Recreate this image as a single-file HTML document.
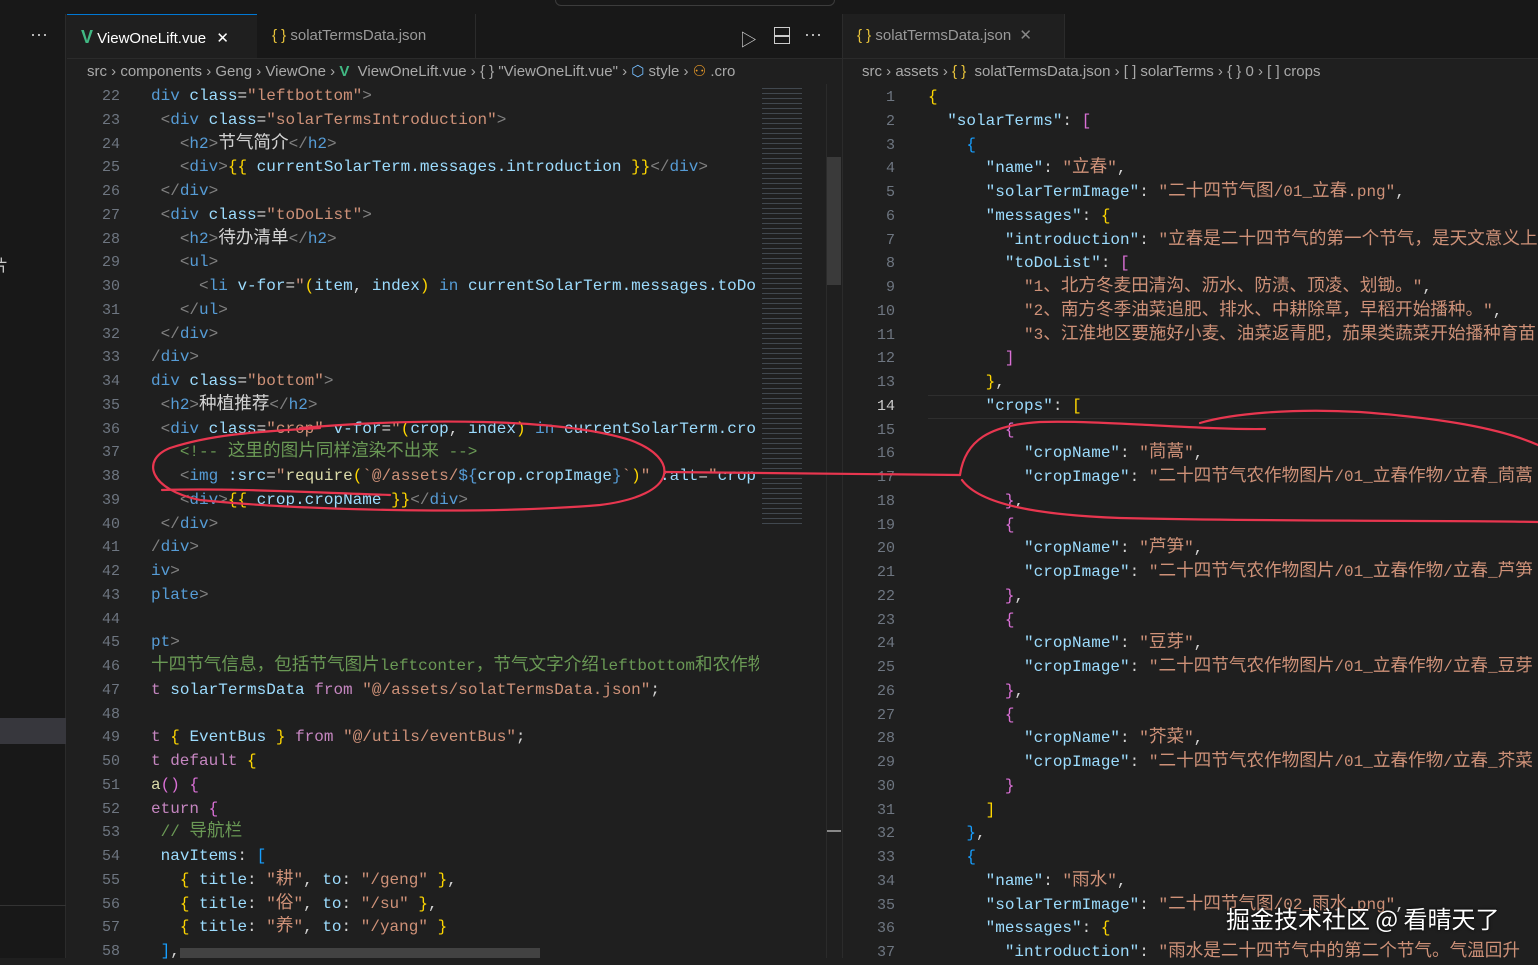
<!DOCTYPE html>
<html><head><meta charset="utf-8"><style>
*{margin:0;padding:0;box-sizing:border-box}
body{width:1538px;height:958px;overflow:hidden;background:#1f1f1f;position:relative;font-family:"Liberation Sans","Noto Sans CJK SC",sans-serif;color:#ccc}
.abs{position:absolute}
.code{position:absolute;font-family:"Liberation Mono","Noto Sans CJK SC",monospace;font-size:16px;white-space:pre;line-height:23.75px}
.ln{position:absolute;font-family:"Liberation Mono",monospace;font-size:15px;color:#6e7681;text-align:right;line-height:23.75px;white-space:pre}
i.z{font-style:normal;font-size:17.6px;line-height:0}
.t{color:#808080}.n{color:#569cd6}.a{color:#9cdcfe}.s{color:#ce9178}.w{color:#d4d4d4}.c{color:#6a9955}.y{color:#ffd700}.p{color:#da70d6}.b{color:#179fff}.k{color:#c586c0}.f{color:#dcdcaa}
.tab{position:absolute;top:14px;height:44px;font-size:15px;line-height:44px}
.bc{position:absolute;top:60px;height:24px;font-size:15px;color:#a9a9a9;line-height:24px;white-space:pre}
</style></head><body>
<div class="abs" style="left:0;top:0;width:1538px;height:14px;background:#181818"></div>
<div class="abs" style="left:555px;top:-6px;width:280px;height:12px;border:1px solid #3c3c3c;border-radius:6px"></div>
<div class="abs" style="left:0;top:14px;width:66px;height:944px;background:#181818;border-right:1px solid #2b2b2b"></div>
<div class="abs" style="left:30px;top:24px;color:#ccc;font-size:18px">···</div>
<div class="abs" style="left:-8px;top:252px;color:#ccc;font-size:16px;font-family:'Noto Sans CJK SC'">片</div>
<div class="abs" style="left:0;top:718px;width:66px;height:26px;background:#37373d"></div>
<div class="abs" style="left:0;top:905px;width:66px;height:1px;background:#333"></div>
<div class="abs" style="left:67px;top:14px;width:1471px;height:45px;background:#181818;border-bottom:1px solid #2b2b2b"></div>
<div class="tab" style="left:67px;width:190px;background:#1f1f1f;border-top:1px solid #0078d4;color:#fff;padding-left:14px"><span style="color:#41b883;font-weight:bold;font-size:18px">V</span> ViewOneLift.vue <span style="margin-left:6px">✕</span></div>
<div class="tab" style="left:258px;width:218px;color:#999;padding-left:14px;border-right:1px solid #2b2b2b"><span style="color:#e8c33a">{ }</span> solatTermsData.json</div>
<div class="abs" style="left:740px;top:26px;color:#ccc;font-size:17px">▷</div>
<div class="abs" style="left:774px;top:27px;width:16px;height:17px;border:1.5px solid #ccc"></div>
<div class="abs" style="left:775px;top:35px;width:14px;height:1.5px;background:#ccc"></div>
<div class="abs" style="left:804px;top:24px;color:#ccc;font-size:18px">···</div>
<div class="abs" style="left:842px;top:14px;width:1px;height:944px;background:#2b2b2b"></div>
<div class="tab" style="left:843px;width:222px;background:#1f1f1f;color:#999;padding-left:14px;border-right:1px solid #2b2b2b"><span style="color:#e8c33a">{ }</span> solatTermsData.json <span style="margin-left:4px;color:#888">✕</span></div>
<div class="bc" style="left:87px">src › components › Geng › ViewOne › <span style="color:#41b883;font-weight:bold">V</span>  ViewOneLift.vue › { } "ViewOneLift.vue" › <span style="color:#75beff">⬡</span> style › <span style="color:#ee9d28">⚇</span> .cro</div>
<div class="bc" style="left:862px">src › assets › <span style="color:#e8c33a">{ }</span>  solatTermsData.json › [ ] solarTerms › { } 0 › [ ] crops</div>
<div class="abs" style="left:762px;top:86px;width:40px;height:440px;opacity:.45;background:repeating-linear-gradient(#1f1f1f 0 2px,#6b7b8a 2px 3px,#1f1f1f 3px 5px)"></div>
<div class="abs" style="left:826px;top:84px;width:16px;height:874px;background:#1f1f1f;border-left:1px solid #2b2b2b"></div>
<div class="abs" style="left:827px;top:157px;width:14px;height:128px;background:#3a3a3a"></div>
<div class="abs" style="left:827px;top:830px;width:14px;height:2px;background:#888"></div>
<div class="abs" style="left:180px;top:948px;width:360px;height:10px;background:#424242"></div>
<div class="ln" style="left:70px;top:85px;width:50px">22
23
24
25
26
27
28
29
30
31
32
33
34
35
36
37
38
39
40
41
42
43
44
45
46
47
48
49
50
51
52
53
54
55
56
57
58</div>
<div class="code" style="left:151px;top:85px;width:608px;overflow:hidden"><span class="n">div</span> <span class="a">class</span><span class="w">=</span><span class="s">"leftbottom"</span><span class="t">&gt;</span>
 <span class="t">&lt;</span><span class="n">div</span> <span class="a">class</span><span class="w">=</span><span class="s">"solarTermsIntroduction"</span><span class="t">&gt;</span>
   <span class="t">&lt;</span><span class="n">h2</span><span class="t">&gt;</span><span class="w"><i class="z">节气简介</i></span><span class="t">&lt;/</span><span class="n">h2</span><span class="t">&gt;</span>
   <span class="t">&lt;</span><span class="n">div</span><span class="t">&gt;</span><span class="y">{{</span> <span class="a">currentSolarTerm.messages.introduction</span> <span class="y">}}</span><span class="t">&lt;/</span><span class="n">div</span><span class="t">&gt;</span>
 <span class="t">&lt;/</span><span class="n">div</span><span class="t">&gt;</span>
 <span class="t">&lt;</span><span class="n">div</span> <span class="a">class</span><span class="w">=</span><span class="s">"toDoList"</span><span class="t">&gt;</span>
   <span class="t">&lt;</span><span class="n">h2</span><span class="t">&gt;</span><span class="w"><i class="z">待办清单</i></span><span class="t">&lt;/</span><span class="n">h2</span><span class="t">&gt;</span>
   <span class="t">&lt;</span><span class="n">ul</span><span class="t">&gt;</span>
     <span class="t">&lt;</span><span class="n">li</span> <span class="a">v-for</span><span class="w">=</span><span class="s">"</span><span class="y">(</span><span class="a">item</span><span class="w">, </span><span class="a">index</span><span class="y">)</span> <span class="n">in</span> <span class="a">currentSolarTerm.messages.toDo</span>
   <span class="t">&lt;/</span><span class="n">ul</span><span class="t">&gt;</span>
 <span class="t">&lt;/</span><span class="n">div</span><span class="t">&gt;</span>
<span class="t">/</span><span class="n">div</span><span class="t">&gt;</span>
<span class="n">div</span> <span class="a">class</span><span class="w">=</span><span class="s">"bottom"</span><span class="t">&gt;</span>
 <span class="t">&lt;</span><span class="n">h2</span><span class="t">&gt;</span><span class="w"><i class="z">种植推荐</i></span><span class="t">&lt;/</span><span class="n">h2</span><span class="t">&gt;</span>
 <span class="t">&lt;</span><span class="n">div</span> <span class="a">class</span><span class="w">=</span><span class="s">"crop"</span> <span class="a">v-for</span><span class="w">=</span><span class="s">"</span><span class="y">(</span><span class="a">crop</span><span class="w">, </span><span class="a">index</span><span class="y">)</span> <span class="n">in</span> <span class="a">currentSolarTerm.cro</span>
   <span class="c">&lt;!-- <i class="z">这里的图片同样渲染不出来</i> --&gt;</span>
   <span class="t">&lt;</span><span class="n">img</span> <span class="a">:src</span><span class="w">=</span><span class="s">"</span><span class="f">require</span><span class="y">(</span><span class="s">`@/assets/</span><span class="n">${</span><span class="a">crop.cropImage</span><span class="n">}</span><span class="s">`</span><span class="y">)</span><span class="s">"</span> <span class="a">:alt</span><span class="w">=</span><span class="s">"</span><span class="a">crop</span>
   <span class="t">&lt;</span><span class="n">div</span><span class="t">&gt;</span><span class="y">{{</span> <span class="a">crop.cropName</span> <span class="y">}}</span><span class="t">&lt;/</span><span class="n">div</span><span class="t">&gt;</span>
 <span class="t">&lt;/</span><span class="n">div</span><span class="t">&gt;</span>
<span class="t">/</span><span class="n">div</span><span class="t">&gt;</span>
<span class="n">iv</span><span class="t">&gt;</span>
<span class="n">plate</span><span class="t">&gt;</span>

<span class="n">pt</span><span class="t">&gt;</span>
<span class="c"><i class="z">十四节气信息，包括节气图片</i>leftconter<i class="z">，节气文字介绍</i>leftbottom<i class="z">和农作物</i></span>
<span class="k">t</span> <span class="a">solarTermsData</span> <span class="k">from</span> <span class="s">"@/assets/solatTermsData.json"</span><span class="w">;</span>

<span class="k">t</span> <span class="y">{</span> <span class="a">EventBus</span> <span class="y">}</span> <span class="k">from</span> <span class="s">"@/utils/eventBus"</span><span class="w">;</span>
<span class="k">t default</span> <span class="y">{</span>
<span class="f">a</span><span class="p">()</span> <span class="p">{</span>
<span class="k">eturn</span> <span class="p">{</span>
 <span class="c">// <i class="z">导航栏</i></span>
 <span class="a">navItems</span><span class="w">:</span> <span class="b">[</span>
   <span class="y">{</span> <span class="a">title</span><span class="w">:</span> <span class="s">"<i class="z">耕</i>"</span><span class="w">,</span> <span class="a">to</span><span class="w">:</span> <span class="s">"/geng"</span> <span class="y">}</span><span class="w">,</span>
   <span class="y">{</span> <span class="a">title</span><span class="w">:</span> <span class="s">"<i class="z">俗</i>"</span><span class="w">,</span> <span class="a">to</span><span class="w">:</span> <span class="s">"/su"</span> <span class="y">}</span><span class="w">,</span>
   <span class="y">{</span> <span class="a">title</span><span class="w">:</span> <span class="s">"<i class="z">养</i>"</span><span class="w">,</span> <span class="a">to</span><span class="w">:</span> <span class="s">"/yang"</span> <span class="y">}</span>
 <span class="b">]</span><span class="w">,</span></div>
<div class="abs" style="left:928px;top:395px;width:610px;height:24px;border-top:1px solid #2e2e2e;border-bottom:1px solid #2e2e2e"></div>
<div class="ln" style="left:850px;top:86px;width:45px">1
2
3
4
5
6
7
8
9
10
11
12
13
<span style="color:#ccc">14</span>
15
16
17
18
19
20
21
22
23
24
25
26
27
28
29
30
31
32
33
34
35
36
37</div>
<div class="code" style="left:928px;top:86px;width:610px;overflow:hidden"><span class="y">{</span>
  <span class="a">"solarTerms"</span><span class="w">:</span> <span class="p">[</span>
    <span class="b">{</span>
      <span class="a">"name"</span><span class="w">:</span> <span class="s">"<i class="z">立春</i>"</span><span class="w">,</span>
      <span class="a">"solarTermImage"</span><span class="w">:</span> <span class="s">"<i class="z">二十四节气图</i>/01_<i class="z">立春</i>.png"</span><span class="w">,</span>
      <span class="a">"messages"</span><span class="w">:</span> <span class="y">{</span>
        <span class="a">"introduction"</span><span class="w">:</span> <span class="s">"<i class="z">立春是二十四节气的第一个节气，是天文意义上</i></span>
        <span class="a">"toDoList"</span><span class="w">:</span> <span class="p">[</span>
          <span class="s">"1<i class="z">、北方冬麦田清沟、沥水、防渍、顶凌、划锄。</i>"</span><span class="w">,</span>
          <span class="s">"2<i class="z">、南方冬季油菜追肥、排水、中耕除草，早稻开始播种。</i>"</span><span class="w">,</span>
          <span class="s">"3<i class="z">、江淮地区要施好小麦、油菜返青肥，茄果类蔬菜开始播种育苗</i></span>
        <span class="p">]</span>
      <span class="y">}</span><span class="w">,</span>
      <span class="a">"crops"</span><span class="w">:</span> <span class="y">[</span>
        <span class="p">{</span>
          <span class="a">"cropName"</span><span class="w">:</span> <span class="s">"<i class="z">茼蒿</i>"</span><span class="w">,</span>
          <span class="a">"cropImage"</span><span class="w">:</span> <span class="s">"<i class="z">二十四节气农作物图片</i>/01_<i class="z">立春作物</i>/<i class="z">立春</i>_<i class="z">茼蒿</i></span>
        <span class="p">}</span><span class="w">,</span>
        <span class="p">{</span>
          <span class="a">"cropName"</span><span class="w">:</span> <span class="s">"<i class="z">芦笋</i>"</span><span class="w">,</span>
          <span class="a">"cropImage"</span><span class="w">:</span> <span class="s">"<i class="z">二十四节气农作物图片</i>/01_<i class="z">立春作物</i>/<i class="z">立春</i>_<i class="z">芦笋</i></span>
        <span class="p">}</span><span class="w">,</span>
        <span class="p">{</span>
          <span class="a">"cropName"</span><span class="w">:</span> <span class="s">"<i class="z">豆芽</i>"</span><span class="w">,</span>
          <span class="a">"cropImage"</span><span class="w">:</span> <span class="s">"<i class="z">二十四节气农作物图片</i>/01_<i class="z">立春作物</i>/<i class="z">立春</i>_<i class="z">豆芽</i></span>
        <span class="p">}</span><span class="w">,</span>
        <span class="p">{</span>
          <span class="a">"cropName"</span><span class="w">:</span> <span class="s">"<i class="z">芥菜</i>"</span><span class="w">,</span>
          <span class="a">"cropImage"</span><span class="w">:</span> <span class="s">"<i class="z">二十四节气农作物图片</i>/01_<i class="z">立春作物</i>/<i class="z">立春</i>_<i class="z">芥菜</i></span>
        <span class="p">}</span>
      <span class="y">]</span>
    <span class="b">}</span><span class="w">,</span>
    <span class="b">{</span>
      <span class="a">"name"</span><span class="w">:</span> <span class="s">"<i class="z">雨水</i>"</span><span class="w">,</span>
      <span class="a">"solarTermImage"</span><span class="w">:</span> <span class="s">"<i class="z">二十四节气图</i>/02_<i class="z">雨水</i>.png"</span><span class="w">,</span>
      <span class="a">"messages"</span><span class="w">:</span> <span class="y">{</span>
        <span class="a">"introduction"</span><span class="w">:</span> <span class="s">"<i class="z">雨水是二十四节气中的第二个节气。气温回升</i></span></div>
<svg class="abs" style="left:0;top:0" width="1538" height="958" viewBox="0 0 1538 958" fill="none" stroke="#e8364f" stroke-width="2.2" stroke-linecap="round">
<path d="M300 428 C420 418 560 418 630 440 C680 458 680 495 600 505 C480 515 300 510 200 500 C150 490 140 460 170 448 C210 435 250 432 320 428"/>
<path d="M162 490 C230 488 300 492 390 495"/>
<path d="M665 472 C760 473 860 474 960 475"/>
<path d="M960 475 C965 440 990 425 1040 422 C1100 420 1200 430 1265 429"/>
<path d="M1200 423 C1230 414 1290 408 1360 412 C1440 418 1500 428 1538 445"/>
<path d="M962 480 C980 505 1040 515 1120 518 C1300 522 1450 520 1538 522"/>
</svg>
<div class="abs" style="left:1226px;top:900px;font-size:24px;color:#fff;font-family:'Noto Sans CJK SC',sans-serif;text-shadow:0 0 3px #000;white-space:nowrap">掘金技术社区 @ 看晴天了</div>
</body></html>
